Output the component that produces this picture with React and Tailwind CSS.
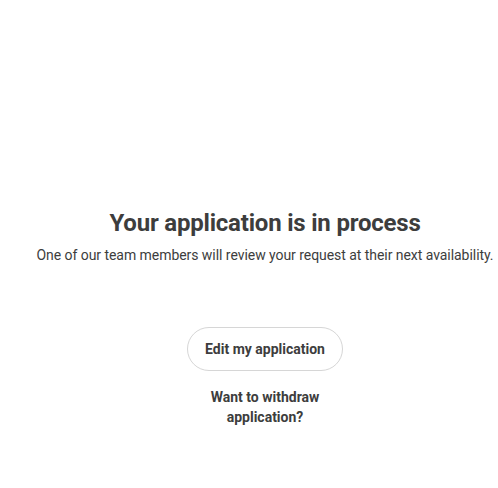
export default function App() {
  return (
    <div className="w-[498px] h-[488px] bg-white pl-8 text-[#3d3d3d]" style={{ fontFamily: "Roboto, 'Liberation Sans', sans-serif" }}>
      <div className="flex flex-col items-center pt-[207px]">
        <h1 className="text-[24px] leading-[32px] font-bold tracking-[-0.2px]">Your application is in process</h1>
        <p className="mt-[6px] text-[14px] leading-[20px] whitespace-nowrap tracking-[-0.05px]">One of our team members will review your request at their next availability.</p>
        <button className="mt-[62px] h-[44px] px-[17px] rounded-full border border-[#d6d6d6] text-[14px] font-bold">Edit my application</button>
        <button className="mt-[16px] w-[140px] text-[14px] leading-[20px] font-bold">Want to withdraw application?</button>
      </div>
    </div>
  );
}
